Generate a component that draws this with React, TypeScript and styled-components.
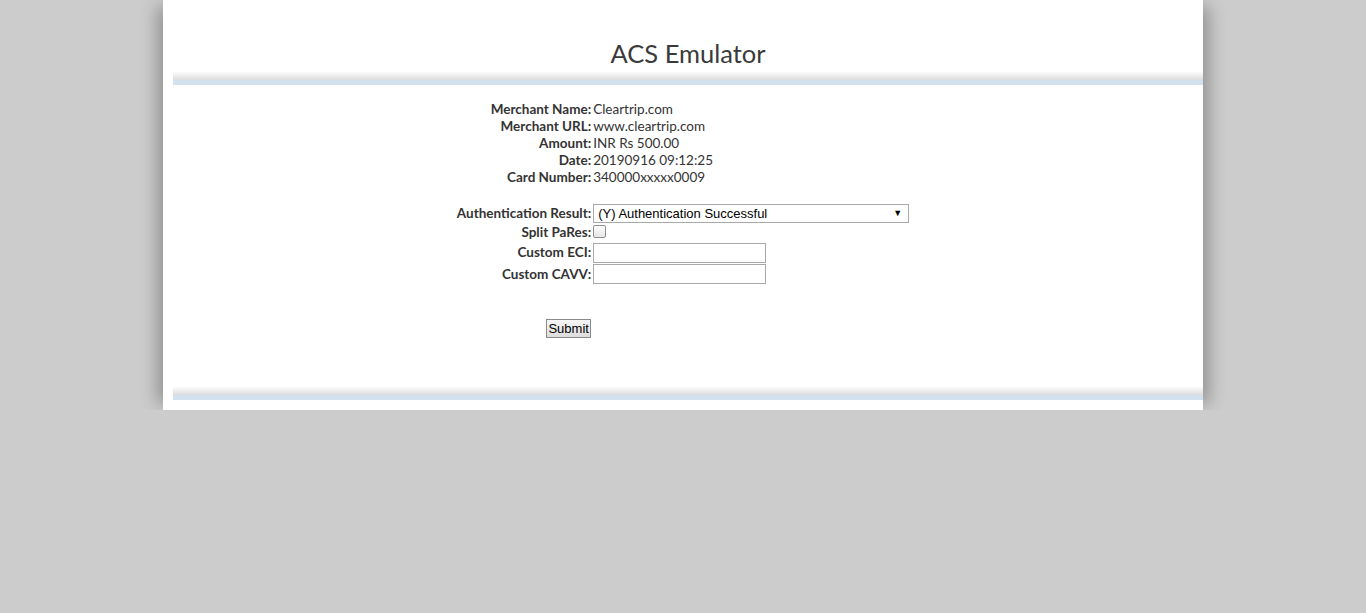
import React from "react";
import styled, { createGlobalStyle } from "styled-components";

const Global = createGlobalStyle`
  html, body { margin: 0; padding: 0; background: #cccccc; }
  body { font-family: "Lato", "Open Sans", sans-serif; color: #333; }
`;

const Page = styled.div`
  width: 1040px;
  margin: 0 auto;
  background: #fff;
  box-shadow: -12px 0 16px -6px rgba(0, 0, 0, 0.28), 12px 0 16px -6px rgba(0, 0, 0, 0.28);
  clip-path: inset(0 -40px 0 -40px);
  padding-bottom: 10px;
`;

const Title = styled.h1`
  margin: 0;
  padding: 37px 0 0 10px;
  height: 35px;
  text-align: center;
  font-family: "Lato", sans-serif;
  font-weight: 400;
  font-size: 25.5px;
  line-height: 32px;
  color: #3a3a3a;
`;

const Bar = styled.div`
  margin-left: 10px;
  height: 8px;
  background: linear-gradient(to bottom, #fafafa 0%, #ececec 50%, #dcdcdc 100%);
  border-bottom: 5px solid #d3e1ee;
`;

const Body = styled.div`
  display: flex;
  justify-content: center;
  padding: 15px 0 0 0;
  height: 302px;
  box-sizing: border-box;
`;

const Table = styled.table`
  border-collapse: collapse;
  border-spacing: 0;
  align-self: flex-start;
`;

const Row = styled.tr<{ $h: number }>`
  height: ${(p) => p.$h}px;
`;

const Label = styled.td`
  text-align: right;
  font-weight: 700;
  font-size: 13.5px;
  color: #333;
  padding: 0 1px 0 0;
  white-space: nowrap;
  vertical-align: middle;
`;

const Value = styled.td<{ $align?: string }>`
  font-size: 13.5px;
  color: #333;
  padding: 0 0 0 1px;
  white-space: nowrap;
  vertical-align: ${(p) => p.$align || "middle"};
`;

const Select = styled.div`
  box-sizing: border-box;
  width: 316px;
  height: 19px;
  border: 1px solid #a9a9a9;
  background: #fff;
  display: flex;
  align-items: center;
  justify-content: space-between;
  padding: 0 6px 0 4px;
  font-family: "Liberation Sans", Arial, sans-serif;
  font-size: 13px;
  color: #000;
`;

const Arrow = styled.span`
  font-size: 9px;
  color: #000;
`;

const Check = styled.span`
  display: block;
  box-sizing: border-box;
  width: 13px;
  height: 13px;
  margin-top: -1px;
  border: 1px solid #8f8f8f;
  border-radius: 2px;
  background: linear-gradient(#fdfdfd, #e6e6e6);
`;

const Input = styled.input`
  box-sizing: border-box;
  width: 173px;
  height: 20px;
  border: 1px solid #a9a9a9;
  margin: 0;
  padding: 1px 2px;
  display: block;
  font-family: "Liberation Sans", Arial, sans-serif;
  font-size: 13px;
`;

const Button = styled.button`
  box-sizing: border-box;
  height: 19px;
  width: 45px;
  padding: 0;
  margin: 0;
  border: 1px solid #8a8a8a;
  background: linear-gradient(#f6f6f6, #dddddd);
  font-family: "Liberation Sans", Arial, sans-serif;
  font-size: 13px;
  color: #000;
`;

const info: [string, string][] = [
  ["Merchant Name:", "Cleartrip.com"],
  ["Merchant URL:", "www.cleartrip.com"],
  ["Amount:", "INR Rs 500.00"],
  ["Date:", "20190916 09:12:25"],
  ["Card Number:", "340000xxxxx0009"],
];

export default function App() {
  return (
    <>
      <Global />
      <Page>
        <Title>ACS Emulator</Title>
        <Bar />
        <Body>
          <Table>
            <tbody>
              {info.map(([l, v]) => (
                <Row $h={17} key={l}>
                  <Label>{l}</Label>
                  <Value>{v}</Value>
                </Row>
              ))}
              <Row $h={18}>
                <Label />
                <Value />
              </Row>
              <Row $h={20}>
                <Label>Authentication Result:</Label>
                <Value>
                  <Select>
                    <span>(Y) Authentication Successful</span>
                    <Arrow>▼</Arrow>
                  </Select>
                </Value>
              </Row>
              <Row $h={18}>
                <Label>Split PaRes:</Label>
                <Value>
                  <Check />
                </Value>
              </Row>
              <Row $h={22}>
                <Label>Custom ECI:</Label>
                <Value $align="bottom">
                  <Input />
                </Value>
              </Row>
              <Row $h={21}>
                <Label>Custom CAVV:</Label>
                <Value>
                  <Input />
                </Value>
              </Row>
              <Row $h={34}>
                <Label />
                <Value />
              </Row>
              <Row $h={21}>
                <Label>
                  <Button>Submit</Button>
                </Label>
                <Value />
              </Row>
            </tbody>
          </Table>
        </Body>
        <Bar />
      </Page>
    </>
  );
}
